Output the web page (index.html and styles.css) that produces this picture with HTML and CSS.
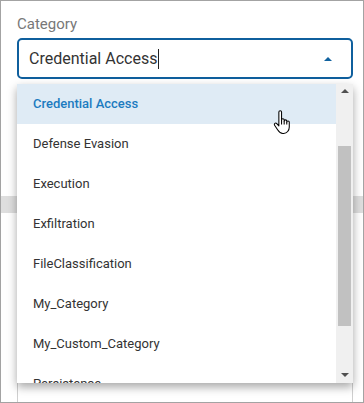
FILE: index.html
```html
<!DOCTYPE html>
<html lang="en">
<head>
  <meta charset="UTF-8" />
  <title>Category</title>
  <link rel="stylesheet" href="styles.css">
</head>
<body>

<div class="panel">
  <div class="field">
    <label class="field-label">Category</label>
    <div class="select">
      <span class="select-value">Credential Access</span><span class="caret"></span>
      <span class="select-arrow"></span>
    </div>
  </div>

  <div class="band"></div>
  <div class="box"></div>

  <!-- open dropdown -->
  <div class="dropdown">
    <ul class="options">
      <li class="option active">Credential Access</li>
      <li class="option">Defense Evasion</li>
      <li class="option">Execution</li>
      <li class="option">Exfiltration</li>
      <li class="option">FileClassification</li>
      <li class="option">My_Category</li>
      <li class="option">My_Custom_Category</li>
      <li class="option">Persistence</li>
    </ul>
    <div class="scrollbar">
      <span class="sb-up"></span>
      <div class="sb-track"><div class="sb-thumb"></div></div>
      <span class="sb-down"></span>
    </div>
  </div>

  <svg class="pointer" width="19" height="25" viewBox="0 0 18 24">
    <path d="M5.5 2c0-1.6 2.6-1.6 2.6 0v7.6c0-1.5 2.5-1.5 2.5 0v1c0-1.5 2.5-1.5 2.5 0v1c0-1.5 2.4-1.5 2.4 0v4.6c0 3.5-2.2 6.3-5.4 6.3H9.3c-2.4 0-3.6-1.4-5-3.6L1.4 14.6c-0.9-1.4 0.9-2.9 2.1-1.6l2 2.2z"
          fill="#fff" stroke="#000" stroke-width="1" stroke-linejoin="round"/>
    <path d="M8.1 9.6v4.2M10.6 10.6v3.2M13.1 11.6v2.2" stroke="#000" stroke-width="1" fill="none"/>
  </svg>
</div>

</body>
</html>
```

FILE: styles.css
```css
body {
  margin: 0;
  font-family: Roboto, "Liberation Sans", sans-serif;
  background: #fff;
}

.panel {
  position: relative;
  width: 364px;
  height: 403px;
  box-sizing: border-box;
  border: 1px solid #a3a3a3;
  overflow: hidden;
  background: #fff;
}

.field {
  padding: 13px 10px 0 16px;
}

.field-label {
  display: block;
  font-size: 15px;
  line-height: 20px;
  color: #787878;
  margin-bottom: 4px;
}

.select {
  display: flex;
  align-items: center;
  height: 41px;
  box-sizing: border-box;
  border: 2px solid #0f5f9d;
  border-radius: 5px;
  padding: 0 19px 0 10px;
  font-size: 16px;
  color: #333;
}

.caret {
  width: 1px;
  height: 20px;
  margin-left: 1px;
  background: #222;
}

.select-arrow {
  margin-left: auto;
  width: 0;
  height: 0;
  border-left: 4px solid transparent;
  border-right: 4px solid transparent;
  border-bottom: 4px solid #11629f;
}

.band {
  margin-top: 117px;
  height: 17px;
  background: #dedede;
}

.box {
  margin: 14px 10px 0 16px;
  height: 220px;
  border: 1px solid #cfcfcf;
}

.dropdown {
  position: absolute;
  left: 16px;
  top: 83px;
  width: 336px;
  height: 299px;
  display: flex;
  background: #fff;
  box-shadow: 0 4px 9px rgba(0, 0, 0, 0.35);
}

.options {
  flex: 1;
  margin: 0;
  padding: 0;
  list-style: none;
  overflow: hidden;
}

.option {
  height: 40px;
  line-height: 40px;
  padding-left: 16px;
  font-size: 13px;
  color: #333;
}

.option.active {
  background: #dfebf5;
  color: #1c7bc0;
  font-weight: 500;
}

.scrollbar {
  width: 17px;
  display: flex;
  flex-direction: column;
  align-items: center;
  background: #f0f0f0;
}

.sb-up, .sb-down {
  width: 0;
  height: 0;
  border-left: 4px solid transparent;
  border-right: 4px solid transparent;
}

.sb-up {
  margin-top: 5px;
  border-bottom: 4px solid #505050;
}

.sb-down {
  margin-bottom: 6px;
  border-top: 4px solid #505050;
}

.sb-track {
  flex: 1;
  align-self: stretch;
  padding: 0 2px;
}

.sb-thumb {
  margin-top: 53px;
  height: 180px;
  background: #c1c1c1;
}

.pointer {
  position: absolute;
  left: 272px;
  top: 109px;
}
```
